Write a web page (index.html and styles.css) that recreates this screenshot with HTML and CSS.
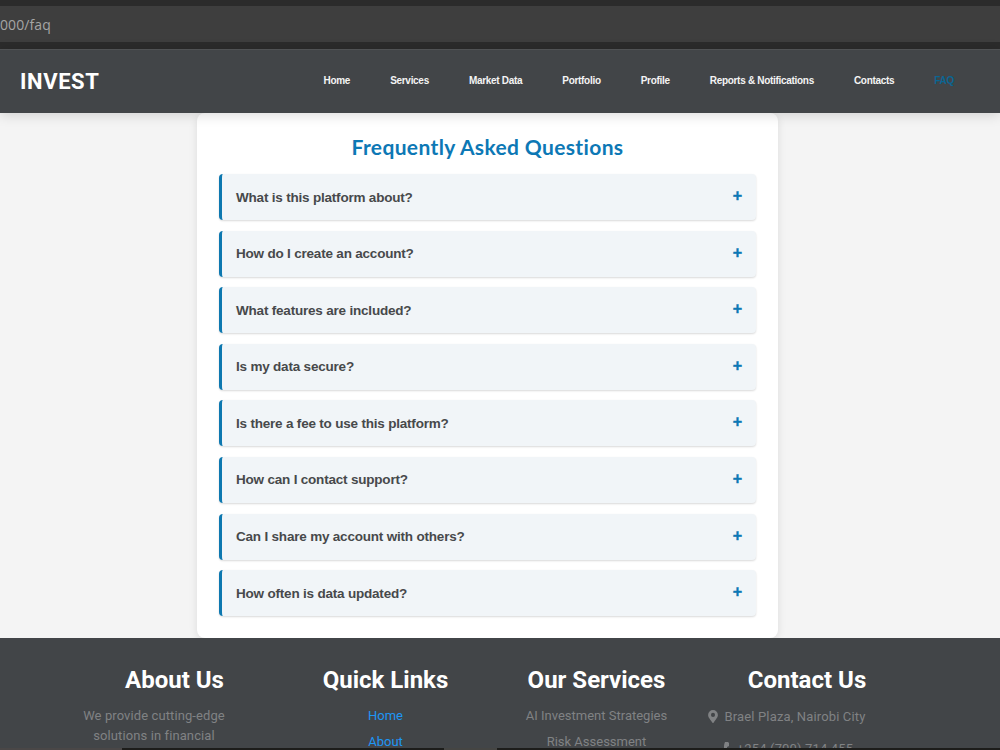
FILE: index.html
```html
<!DOCTYPE html>
<html lang="en">
<head>
  <meta charset="UTF-8" />
  <meta name="viewport" content="width=device-width, initial-scale=1.0" />
  <title>FAQ - Invest</title>
  <link rel="stylesheet" href="styles.css">
</head>
<body>
  <div class="screen">
    <div class="browser-bar">
      <div class="address">000/faq</div>
    </div>
    <header class="navbar">
      <div class="logo">INVEST</div>
      <nav class="nav-links">
        <a href="#">Home</a>
        <a href="#">Services</a>
        <a href="#">Market Data</a>
        <a href="#">Portfolio</a>
        <a href="#">Profile</a>
        <a href="#">Reports &amp; Notifications</a>
        <a href="#">Contacts</a>
        <a href="#" class="active">FAQ</a>
      </nav>
    </header>
    <main class="content">
      <section class="faq-container">
        <h2 class="faq-title">Frequently Asked Questions</h2>
        <div class="faq-list">
          <div class="faq-item"><span class="question">What is this platform about?</span><span class="toggle">+</span></div>
          <div class="faq-item"><span class="question">How do I create an account?</span><span class="toggle">+</span></div>
          <div class="faq-item"><span class="question">What features are included?</span><span class="toggle">+</span></div>
          <div class="faq-item"><span class="question">Is my data secure?</span><span class="toggle">+</span></div>
          <div class="faq-item"><span class="question">Is there a fee to use this platform?</span><span class="toggle">+</span></div>
          <div class="faq-item"><span class="question">How can I contact support?</span><span class="toggle">+</span></div>
          <div class="faq-item"><span class="question">Can I share my account with others?</span><span class="toggle">+</span></div>
          <div class="faq-item"><span class="question">How often is data updated?</span><span class="toggle">+</span></div>
        </div>
      </section>
    </main>
    <footer class="footer">
      <div class="footer-column about">
        <h3>About Us</h3>
        <p>We provide cutting-edge<br>solutions in financial</p>
      </div>
      <div class="footer-column">
        <h3>Quick Links</h3>
        <ul>
          <li><a href="#">Home</a></li>
          <li><a href="#">About</a></li>
        </ul>
      </div>
      <div class="footer-column">
        <h3>Our Services</h3>
        <ul>
          <li>AI Investment Strategies</li>
          <li>Risk Assessment</li>
        </ul>
      </div>
      <div class="footer-column contact">
        <h3>Contact Us</h3>
        <p class="contact-line">
          <svg class="pin" viewBox="0 0 384 512"><path d="M172 502C27 291 0 269 0 192a192 192 0 0 1 384 0c0 77-27 99-172 310a24 24 0 0 1-40 0zM192 272a80 80 0 1 0 0-160 80 80 0 0 0 0 160z"/></svg>
          <span>Brael Plaza, Nairobi City</span>
        </p>
        <p class="contact-line phone">
          <svg class="handset" viewBox="0 0 6 12"><path d="M1 0h3l1 1v3l-2 1v2l2 1v3l-1 1H1C-.5 9-.5 3 1 0z"/></svg>
          <span>+254 (700) 714 455</span>
        </p>
      </div>
    </footer>
    <div class="taskbar"></div>
  </div>
</body>
</html>
```
FILE: styles.css
```css
* {
  margin: 0;
  padding: 0;
  box-sizing: border-box;
}
body {
  font-family: "Liberation Sans", Arial, sans-serif;
  background: #f4f4f4;
  overflow: hidden;
}
.screen {
  height: 750px;
  display: flex;
  flex-direction: column;
  overflow: hidden;
  position: relative;
}
.browser-bar {
  height: 49px;
  flex-shrink: 0;
  padding: 6px 0;
  background: #2b2b2b;
}
.address {
  height: 36px;
  line-height: 37px;
  background: #3e3e3e;
  color: #a5a5a5;
  font-family: "Open Sans", sans-serif;
  font-size: 14px;
  letter-spacing: 0.1px;
}
.navbar {
  height: 64px;
  flex-shrink: 0;
  display: flex;
  align-items: center;
  justify-content: space-between;
  padding: 0 46px 0 20px;
  background: #424548;
  border-top: 1px solid #505254;
  box-shadow: 0 2px 12px rgba(0, 0, 0, 0.15);
  z-index: 2;
}
.logo {
  color: #fff;
  font-family: Roboto, sans-serif;
  font-size: 22px;
  font-weight: 700;
  letter-spacing: 0.6px;
}
.nav-links {
  display: flex;
  gap: 40px;
  margin-top: -3px;
}
.nav-links a {
  color: #f4f4f4;
  font-size: 10px;
  font-weight: 700;
  letter-spacing: -0.3px;
  text-decoration: none;
  white-space: nowrap;
}
.nav-links .active {
  color: #0b6594;
}
.content {
  height: 525px;
  flex-shrink: 0;
  padding-left: 197px;
}
.faq-container {
  width: 581px;
  height: 525px;
  padding: 21px 22px 0 22px;
  background: #fff;
  border-radius: 8px;
  box-shadow: 0 2px 8px rgba(0, 0, 0, 0.1);
}
.faq-title {
  height: 40px;
  line-height: 26px;
  color: #0d78b5;
  font-family: Lato, sans-serif;
  font-size: 21px;
  font-weight: 700;
  letter-spacing: 0.36px;
  font-variant-ligatures: none;
  text-align: center;
}
.faq-list {
  display: flex;
  flex-direction: column;
  gap: 10.6px;
}
.faq-item {
  height: 46px;
  display: flex;
  align-items: center;
  justify-content: space-between;
  padding: 0 14px 0 14px;
  background: #f1f5f8;
  border-left: 3px solid #0d78b0;
  border-radius: 4px;
  box-shadow: 0 1px 2px rgba(0, 0, 0, 0.15);
}
.question {
  color: #47494b;
  font-size: 13.5px;
  font-weight: 700;
  letter-spacing: -0.2px;
}
.toggle {
  padding-bottom: 2px;
  color: #0d78b5;
  font-size: 16px;
  font-weight: 700;
  -webkit-text-stroke: 0.4px #0d78b5;
}
.footer {
  height: 112px;
  flex-shrink: 0;
  display: grid;
  grid-template-columns: 211px 211px 211px 211px;
  padding: 26px 0 0 69px;
  overflow: hidden;
  background: #424548;
  color: #808284;
  font-family: Roboto, sans-serif;
  font-size: 13px;
  text-align: center;
  z-index: 3;
}
.footer-column h3 {
  height: 42px;
  line-height: 32px;
  color: #fff;
  font-size: 24px;
  font-weight: 700;
}
.footer-column ul {
  list-style: none;
}
.footer-column li {
  height: 26px;
  line-height: 20px;
}
.footer-column a {
  color: #1e96f5;
  text-decoration: none;
}
.about p {
  padding-right: 41px;
  line-height: 20px;
  letter-spacing: 0.1px;
}
.contact-line {
  display: flex;
  justify-content: center;
  align-items: center;
  gap: 7px;
  height: 20px;
  padding-right: 42px;
  letter-spacing: 0.15px;
}
.contact h3 {
  padding-right: 1px;
}
.contact-line svg {
  fill: #808284;
}
.pin {
  width: 10px;
  height: 13px;
}
.handset {
  width: 6px;
  height: 12px;
}
.phone {
  margin-top: 12px;
  padding-right: 38px;
}
.taskbar {
  position: absolute;
  left: 0;
  bottom: 0;
  width: 100%;
  height: 2px;
  background: linear-gradient(to right, #4a4747 122px, #1d1d1b 122px 444px, #454543 444px 497px, #1d1d1b 497px);
  z-index: 4;
}
```
